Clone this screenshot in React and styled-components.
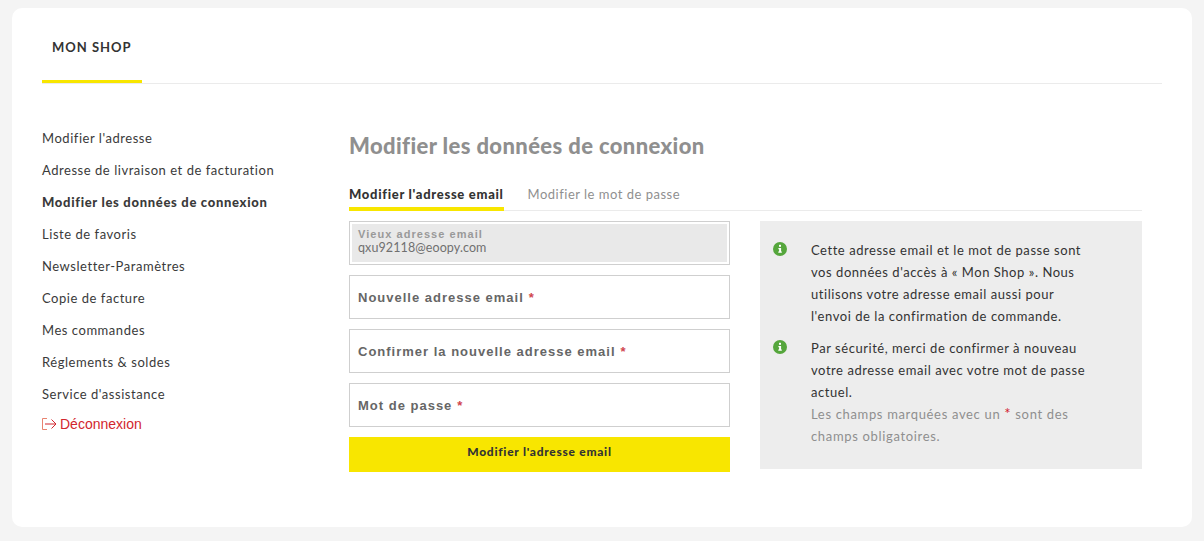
import React from 'react';
import styled, { createGlobalStyle } from 'styled-components';

const GlobalStyle = createGlobalStyle`
  html, body {
    margin: 0;
    padding: 0;
    background: #f4f4f4;
    font-family: Lato, "Liberation Sans", sans-serif;
    color: #333;
  }
`;

const Page = styled.div`
  padding: 8px 12px 14px;
`;

const Card = styled.div`
  height: 519px;
  box-sizing: border-box;
  background: #fff;
  border-radius: 10px;
  padding: 0 30px;
`;

const TabBar = styled.div`
  height: 75px;
  box-sizing: content-box;
  border-bottom: 1px solid #ebebeb;
  display: flex;
`;

const ShopTab = styled.div`
  width: 100px;
  height: 75px;
  box-sizing: border-box;
  border-bottom: 3px solid #f8e600;
  padding: 31px 0 0 10px;
  font-size: 13px;
  line-height: 16px;
  font-weight: 700;
  letter-spacing: 1px;
  color: #333;
`;

const Columns = styled.div`
  display: flex;
  padding-top: 38px;
`;

const Side = styled.nav`
  width: 307px;
  display: flex;
  flex-direction: column;
`;

const SideLink = styled.a`
  height: 32px;
  font-size: 13px;
  line-height: 32px;
  letter-spacing: ${(p) => (p.$active ? '0.69px' : '0.54px')};
  font-weight: ${(p) => (p.$active ? 900 : 400)};
  color: #3a3a3a;
  white-space: nowrap;
`;

const Logout = styled.a`
  display: flex;
  align-items: center;
  gap: 3px;
  height: 28px;
  font-family: "Liberation Sans", sans-serif;
  font-size: 14px;
  color: #d2262e;
  svg {
    display: block;
  }
`;

const Main = styled.main`
  width: 793px;
`;

const Title = styled.h1`
  margin: 0;
  padding-top: 9px;
  font-size: 22px;
  line-height: 30px;
  font-weight: 900;
  letter-spacing: 0.38px;
  color: #8f8f8f;
`;

const SubTabs = styled.div`
  display: flex;
  gap: 24px;
  margin-top: 20px;
  height: 29px;
  border-bottom: 1px solid #ebebeb;
`;

const SubTab = styled.div`
  box-sizing: content-box;
  height: ${(p) => (p.$active ? '26px' : '29px')};
  border-bottom: ${(p) => (p.$active ? '4px solid #f8e600' : '0')};
  font-size: 13px;
  line-height: 26px;
  letter-spacing: ${(p) => (p.$active ? '0.7px' : '0.5px')};
  font-weight: ${(p) => (p.$active ? 900 : 400)};
  color: ${(p) => (p.$active ? '#333' : '#8f8f8f')};
`;

const Body = styled.div`
  display: flex;
  gap: 30px;
  margin-top: 10px;
`;

const Form = styled.form`
  width: 381px;
  display: flex;
  flex-direction: column;
  gap: 10px;
`;

const Field = styled.div`
  height: 44px;
  box-sizing: border-box;
  border: 1px solid #cfcfcf;
  padding: 0 8px;
  display: flex;
  align-items: center;
  font-family: "Liberation Sans", sans-serif;
  font-size: 13px;
  font-weight: 700;
  letter-spacing: 1px;
  color: #666;
`;

const Required = styled.span`
  color: #d0454e;
  margin-left: 5px;
`;

const OldField = styled.div`
  height: 44px;
  box-sizing: border-box;
  border: 1px solid #cfcfcf;
  padding: 2px;
`;

const OldInner = styled.div`
  height: 38px;
  box-sizing: border-box;
  background: #e9e9e9;
  padding: 4px 6px 0;
`;

const OldLabel = styled.div`
  font-family: "Liberation Sans", sans-serif;
  font-size: 11px;
  line-height: 12px;
  font-weight: 700;
  letter-spacing: 1.05px;
  color: #999;
`;

const OldValue = styled.div`
  font-size: 12.5px;
  line-height: 16px;
  letter-spacing: 0.1px;
  color: #707070;
`;

const Submit = styled.button`
  height: 35px;
  border: 0;
  padding: 0 0 6px;
  background: #f8e600;
  font-family: Lato, sans-serif;
  font-size: 12px;
  font-weight: 900;
  letter-spacing: 0.72px;
  color: #333;
`;

const Panel = styled.aside`
  width: 382px;
  height: 248px;
  box-sizing: border-box;
  background: #ededed;
  padding: 18px 40px 0 13px;
`;

const Note = styled.div`
  display: flex;
  gap: 24px;
  margin-bottom: 10px;
  svg {
    flex: none;
    margin-top: 3px;
  }
`;

const NoteText = styled.div`
  font-size: 13px;
  line-height: 22px;
  letter-spacing: 0.55px;
  color: #333;
`;

const Muted = styled.span`
  display: block;
  letter-spacing: 0.66px;
  color: #8f8f8f;
`;

const Star = styled.span`
  color: #d2202c;
  font-size: 15px;
  line-height: 15px;
`;

const InfoIcon = () => (
  <svg width="14" height="14" viewBox="0 0 14 14">
    <circle cx="7" cy="7" r="7" fill="#55a63c" />
    <rect x="6" y="2.8" width="2" height="2" fill="#fff" />
    <path d="M5.4 6h2.7v3.6h.7v1.2H5.3V9.6h.8V7.2h-.7z" fill="#fff" />
  </svg>
);

const LogoutIcon = () => (
  <svg width="15" height="12" viewBox="0 0 15 12" fill="none" strokeWidth="1">
    <path d="M5 .5H.5v11H5" stroke="#e8836f" />
    <path d="M3 6h11M9.5 1.5 14 6l-4.5 4.5" stroke="#d2262e" />
  </svg>
);

const links = [
  "Modifier l'adresse",
  'Adresse de livraison et de facturation',
  'Modifier les données de connexion',
  'Liste de favoris',
  'Newsletter-Paramètres',
  'Copie de facture',
  'Mes commandes',
  'Réglements & soldes',
  "Service d'assistance",
];

export default function App() {
  return (
    <Page>
      <GlobalStyle />
      <Card>
        <TabBar>
          <ShopTab>MON SHOP</ShopTab>
        </TabBar>
        <Columns>
          <Side>
            {links.map((l, i) => (
              <SideLink key={l} $active={i === 2}>{l}</SideLink>
            ))}
            <Logout><LogoutIcon />Déconnexion</Logout>
          </Side>
          <Main>
            <Title>Modifier les données de connexion</Title>
            <SubTabs>
              <SubTab $active>Modifier l'adresse email</SubTab>
              <SubTab>Modifier le mot de passe</SubTab>
            </SubTabs>
            <Body>
              <Form>
                <OldField>
                  <OldInner>
                    <OldLabel>Vieux adresse email</OldLabel>
                    <OldValue>qxu92118@eoopy.com</OldValue>
                  </OldInner>
                </OldField>
                <Field>Nouvelle adresse email<Required>*</Required></Field>
                <Field>Confirmer la nouvelle adresse email<Required>*</Required></Field>
                <Field>Mot de passe<Required>*</Required></Field>
                <Submit type="button">Modifier l'adresse email</Submit>
              </Form>
              <Panel>
                <Note>
                  <InfoIcon />
                  <NoteText>
                    Cette adresse email et le mot de passe sont<br />
                    vos données d'accès à « Mon Shop ». Nous<br />
                    utilisons votre adresse email aussi pour<br />
                    l'envoi de la confirmation de commande.
                  </NoteText>
                </Note>
                <Note>
                  <InfoIcon />
                  <NoteText>
                    Par sécurité, merci de confirmer à nouveau<br />
                    votre adresse email avec votre mot de passe<br />
                    actuel.
                    <Muted>
                      Les champs marquées avec un <Star>*</Star> sont des<br />
                      champs obligatoires.
                    </Muted>
                  </NoteText>
                </Note>
              </Panel>
            </Body>
          </Main>
        </Columns>
      </Card>
    </Page>
  );
}
